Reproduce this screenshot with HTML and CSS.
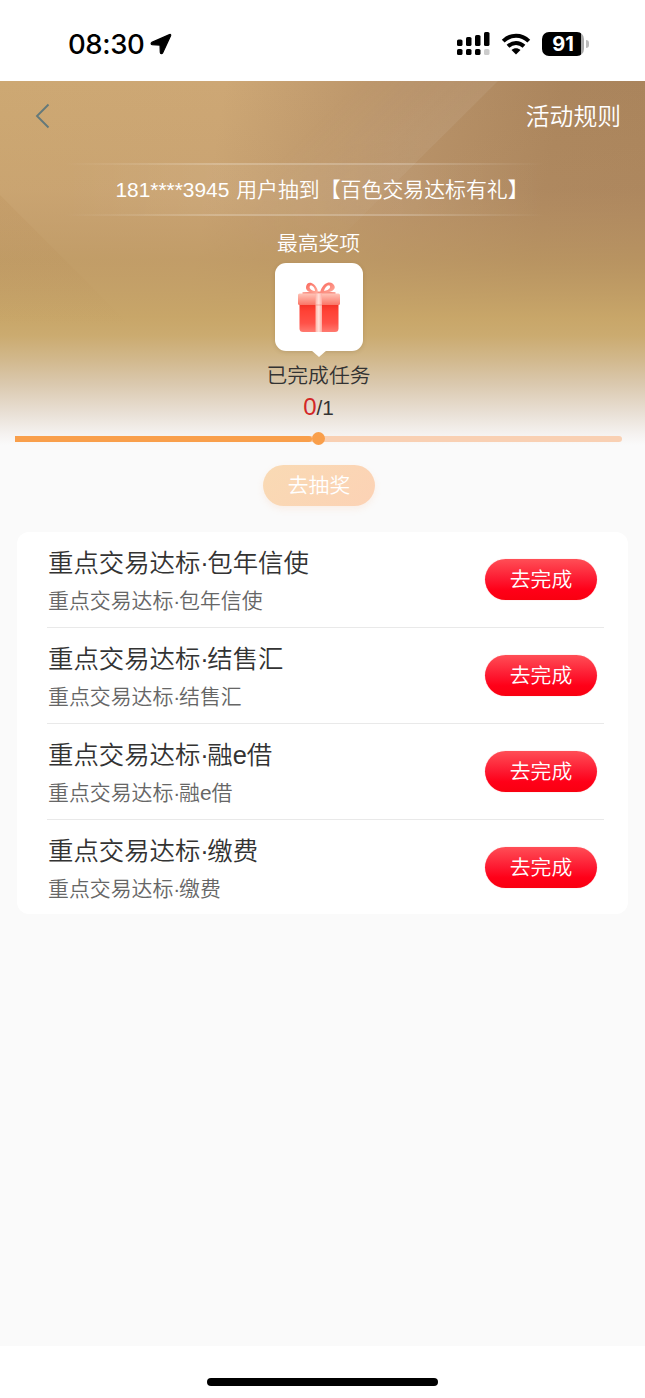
FILE: index.html
```html
<!DOCTYPE html>
<html lang="zh-CN">
<head>
<meta charset="utf-8">
<title>活动</title>
<link rel="stylesheet" href="styles.css">
</head>
<body>
<div class="screen">
  <header class="status">
    <div class="status-left">
      <span class="clock">08:30</span>
      <svg class="location" width="22" height="22" viewBox="0 0 22 22"><path stroke="#000" stroke-width="1.200" stroke-linejoin="round" d="M19.500 1.600 1.800 9.400C.8 10 .9 11.500 2.100 11.700L10 12.100 10.300 19.500C10.500 21 12 21 12.600 19.900L20.600 2.700C21 1.600 20.500 1.200 19.500 1.600Z"/></svg>
    </div>
    <div class="status-right">
      <svg width="33" height="24" viewBox="0 0 33 24"><rect x="0" y="7.500" width="5.500" height="6.500" rx="1.600"/><rect x="9" y="5" width="5.500" height="9" rx="1.600"/><rect x="18" y="3" width="5.500" height="11" rx="1.600"/><rect x="27" y="0" width="5.500" height="14" rx="1.600"/><rect x="0" y="17" width="5.500" height="6" rx="1.600"/><rect x="9" y="17" width="5.500" height="6" rx="1.600"/><rect x="18" y="17" width="5.500" height="6" rx="1.600"/><rect x="27" y="17" width="5.500" height="6" rx="1.600" fill="#ccc"/></svg>
      <svg class="wifi" width="30" height="22" viewBox="0 0 30 22" fill="none" stroke="#000" stroke-width="4"><path d="M2.200 8.100C9.600.900 20.400.900 27.800 8.100"/><path d="M7 13.300C11.700 8.900 18.300 8.900 23 13.300"/><path d="M15 21.500 10.500 17C13.200 14.500 16.800 14.500 19.500 17Z" fill="#000" stroke="none"/></svg>
      <div class="battery"><span class="battery-level">91</span><i class="battery-tip"></i></div>
    </div>
  </header>

  <main class="page">
    <section class="hero">
      <svg class="hero-art" width="645" height="364" viewBox="0 0 645 364">
        <defs>
          <linearGradient id="base" x1="0" y1="0" x2="645" y2="110" gradientUnits="userSpaceOnUse"><stop offset="0" stop-color="#cda873"/><stop offset=".34" stop-color="#cda775"/><stop offset=".62" stop-color="#b89269"/><stop offset=".85" stop-color="#ab855d"/><stop offset="1" stop-color="#aa845c"/></linearGradient>
          <linearGradient id="gold" x1="0" y1="0" x2="0" y2="1"><stop offset="0" stop-color="#bd9862" stop-opacity="0"/><stop offset=".3" stop-color="#bc9568" stop-opacity=".2"/><stop offset=".49" stop-color="#bd9963" stop-opacity=".72"/><stop offset=".65" stop-color="#c8a669"/><stop offset=".7" stop-color="#cbab70"/><stop offset=".76" stop-color="#d1b78a"/><stop offset=".83" stop-color="#dac8ad"/><stop offset=".91" stop-color="#e8dfd4"/><stop offset=".97" stop-color="#f5f2f0"/><stop offset="1" stop-color="#fafafa"/></linearGradient>
          <linearGradient id="ray" x1="405" y1="92.500" x2="335" y2="22" gradientUnits="userSpaceOnUse"><stop offset="0" stop-color="#fff" stop-opacity=".07"/><stop offset="1" stop-color="#fff" stop-opacity="0"/></linearGradient>
          <linearGradient id="raymask" x1="0" y1="0" x2="0" y2="1"><stop offset=".3" stop-color="#fff"/><stop offset="1" stop-color="#000"/></linearGradient>
          <mask id="fade"><rect width="645" height="185" fill="url(#raymask)"/></mask>
          <linearGradient id="shade" x1="0" y1="110" x2="0" y2="245" gradientUnits="userSpaceOnUse"><stop offset="0" stop-color="#a9793f" stop-opacity=".12"/><stop offset="1" stop-color="#a9793f" stop-opacity="0"/></linearGradient>
        </defs>
        <rect width="645" height="364" fill="url(#base)"/>
        <rect width="645" height="364" fill="url(#gold)"/>
        <path d="M498 0 312 185H100L200 0Z" fill="url(#ray)" mask="url(#fade)"/>
        <path d="M0 114 131 245H0Z" fill="url(#shade)"/>
      </svg>
      <nav class="nav">
        <svg width="15" height="26" viewBox="0 0 15 26" fill="none" stroke="#64797a" stroke-width="1.900"><path d="M13.500 1.500 2 13 13.500 24.500"/></svg>
        <span class="rules">活动规则</span>
      </nav>
      <div class="winner">181****3945 用户抽到【百色交易达标有礼】</div>
      <div class="prize">
        <div class="prize-label">最高奖项</div>
        <div class="gift">
          <svg width="44" height="52" viewBox="0 0 44 52">
            <defs>
              <linearGradient id="box" x1="0" y1="0" x2="0" y2="1"><stop stop-color="#ef2c20"/><stop offset=".3" stop-color="#ff4135"/><stop offset=".7" stop-color="#ff5148"/><stop offset="1" stop-color="#ff7a70"/></linearGradient>
              <linearGradient id="lid" x1="0" y1="0" x2="0" y2="1"><stop stop-color="#ffc4b7"/><stop offset="1" stop-color="#fa7566"/></linearGradient>
              <linearGradient id="ribbon" x1="0" y1="0" x2="1" y2="0"><stop stop-color="#ffb5a9"/><stop offset=".5" stop-color="#ffe1da"/><stop offset="1" stop-color="#ffaaa0"/></linearGradient>
              <linearGradient id="bow" x1="0" y1="0" x2="1" y2="1"><stop stop-color="#fa655a"/><stop offset="1" stop-color="#ffaf9f"/></linearGradient>
            </defs>
            <path d="M2.500 21H41.500V47.500Q41.500 51 38 51H6Q2.500 51 2.500 47.500Z" fill="url(#box)"/>
            <path d="M5.500 11.200 20 10.500H25L38.500 11.200V13H5.500Z" fill="#f98f83"/>
            <rect x="1" y="12.500" width="42" height="11.500" rx="1.500" fill="url(#lid)"/>
            <path d="M18.500 12.500H25V51H18.500Z" fill="url(#ribbon)"/>
            <path d="M18.500 24H25" stroke="#ee786a" opacity=".5"/>
            <g fill="url(#bow)" fill-rule="evenodd"><path d="M20.500 12C14 12 8.500 10.500 9 6 9.500 1.500 13.500.500 17 3.500 20 6.300 21.500 10 20.500 12ZM18 10C18 7.300 16 4.800 14 4.200 11.300 5.300 12.500 9.300 18 10Z"/><path d="M23.500 12C30 12 38 10.500 37.800 6 37.200 1.300 31.500 0 28 3 25 5.800 22.800 10 23.500 12ZM27 10C27.500 7 29.500 4.500 32 4.200 34.500 5.300 33 9 27 10Z"/></g>
          </svg>
        </div>
        <div class="done-label">已完成任务</div>
        <div class="count"><span class="count-now">0</span>/1</div>
      </div>
      <div class="progress"><div class="progress-fill"></div><div class="progress-dot"></div></div>
    </section>
    <button class="draw">去抽奖</button>
    <section class="tasks">
      <article class="task"><div class="task-text"><h2>重点交易达标<b class="dot">·</b>包年信使</h2><p>重点交易达标<b class="dot">·</b>包年信使</p></div><button class="go">去完成</button></article>
      <article class="task"><div class="task-text"><h2>重点交易达标<b class="dot">·</b>结售汇</h2><p>重点交易达标<b class="dot">·</b>结售汇</p></div><button class="go">去完成</button></article>
      <article class="task"><div class="task-text"><h2>重点交易达标<b class="dot">·</b>融e借</h2><p>重点交易达标<b class="dot">·</b>融e借</p></div><button class="go">去完成</button></article>
      <article class="task"><div class="task-text"><h2>重点交易达标<b class="dot">·</b>缴费</h2><p>重点交易达标<b class="dot">·</b>缴费</p></div><button class="go">去完成</button></article>
    </section>
  </main>
  <footer class="home"><div class="home-bar"></div></footer>
</div>
</body>
</html>
```
FILE: styles.css
```css
* { box-sizing: border-box; }
body {
  margin: 0;
  background: #fff;
  color: #333;
  font-family: "Liberation Sans", "Noto Sans CJK SC", sans-serif;
  font-weight: 350;
}
svg { display: block; flex: none; }
button {
  border: 0;
  padding: 0;
  font: inherit;
  color: #fff;
}
.screen {
  width: 645px;
  height: 1398px;
  display: flex;
  flex-direction: column;
  overflow: hidden;
}

/* Status bar */
.status {
  flex: none;
  height: 81px;
  padding: 3px 56px 0 68px;
  display: flex;
  justify-content: space-between;
  align-items: flex-start;
}
.status-left, .status-right { display: flex; align-items: center; }
.status-left { height: 82px; gap: 4px; }
.status-right { padding-top: 29px; }
.clock {
  font: 500 27.5px/34px Inter, sans-serif;
  letter-spacing: -.4px;
  color: #000;
  width: 78px;
  white-space: nowrap;
}
.wifi { margin-left: 11px; }
.battery { display: flex; align-items: center; gap: 2px; margin-left: 11px; }
.battery-level {
  width: 42px;
  height: 24px;
  border-radius: 7px;
  background: linear-gradient(90deg, #000 39px, #aaa 39px);
  color: #fff;
  font: 700 20px/24px Inter, sans-serif;
  text-align: center;
}
.battery-tip { width: 3px; height: 8px; border-radius: 0 3px 3px 0; background: #bbb; }

/* Hero */
.page { flex: 1; background: #fafafa; }
.hero { position: relative; height: 364px; }
.hero-art { position: absolute; left: 0; top: 0; }
.hero > :not(.hero-art) { position: relative; }
.nav {
  height: 82px;
  padding: 0 24px 12px 35px;
  display: flex;
  align-items: center;
  justify-content: space-between;
}
.rules { font-size: 23.8px; line-height: 34px; padding-top: 2px; color: #fff; }
.winner {
  height: 53px;
  margin: 0 63px;
  padding-left: 52.5px;
  font-size: 20.9px;
  line-height: 54px;
  word-spacing: 1px;
  white-space: nowrap;
  color: #fff;
  background:
    linear-gradient(90deg, transparent, rgba(255,255,255,.2) 30%, rgba(255,255,255,.2) 65%, transparent 93%) 0 0 / 100% 2px no-repeat,
    linear-gradient(90deg, transparent, rgba(255,255,255,.2) 30%, rgba(255,255,255,.2) 65%, transparent 93%) 0 100% / 100% 2px no-repeat,
    linear-gradient(90deg, transparent, rgba(255,255,255,.05) 30%, rgba(255,255,255,.05) 65%, transparent 93%);
}
.prize {
  width: 637px;
  display: flex;
  flex-direction: column;
  align-items: center;
  font-size: 20.8px;
}
.prize-label { height: 46px; line-height: 56px; color: #fff; }
.gift {
  position: relative;
  width: 88px;
  height: 88px;
  margin: 1px 0 0 1px;
  padding: 18px 22px;
  border-radius: 11px;
  background: #fff;
  box-shadow: 0 1px 4px rgba(90,60,20,.18);
}
.gift::after {
  content: "";
  position: absolute;
  left: 36px;
  top: 87px;
  border: 8px solid transparent;
  border-top: 7px solid #fff;
  border-bottom: 0;
}
.done-label { height: 41px; line-height: 50px; }
.count { height: 30px; line-height: 30px; font-size: 20.8px; }
.count-now { font-size: 24px; color: #d32727; }
.progress {
  width: 607px;
  height: 6px;
  margin: 13.5px 0 0 15px;
  display: flex;
  align-items: center;
  border-radius: 0 3px 3px 0;
  background: #f9d0b3;
}
.progress-fill { width: 297px; height: 6px; border-radius: 0 3px 3px 0; background: #f99f4b; }
.progress-dot { width: 13px; height: 13px; border-radius: 50%; background: #f99f4b; }
.draw {
  display: block;
  width: 112px;
  height: 41px;
  margin: 20px 0 0 263px;
  border-radius: 21px;
  background: linear-gradient(135deg, #f9dab4, #fcd2b5);
  box-shadow: 0 3px 7px rgba(250,170,120,.14);
  font-size: 20.8px;
  line-height: 41px;
}

/* Task list */
.tasks {
  width: 611px;
  height: 382px;
  margin: 26px 0 0 17px;
  padding: 0 24px 0 30px;
  border-radius: 12px;
  background: #fff;
}
.task {
  height: 96px;
  padding: 0 7px 0 1px;
  display: flex;
  align-items: center;
  justify-content: space-between;
  border-bottom: 1px solid #e9e9e9;
}
.task:last-child { border-color: transparent; }
.task-text { padding-top: 4px; }
.task h2, .task p { margin: 0; font-weight: 350; white-space: nowrap; }
.task h2 { font-size: 25.4px; line-height: 38px; }
.task p { font-size: 20.9px; line-height: 37px; color: #666; }
.dot { font-weight: 350; letter-spacing: -.06em; }
.go {
  width: 112px;
  height: 41px;
  margin-bottom: 1px;
  border-radius: 21px;
  background: linear-gradient(#ff4e56, #fd1930 50%, #ff0018 75%, #f90010);
  box-shadow: 0 0 1px rgba(255,0,20,.4);
  font-size: 20.8px;
  line-height: 41px;
}

/* Home indicator */
.home { flex: none; height: 52px; padding: 32px 0 0 207px; }
.home-bar { width: 231px; height: 8px; border-radius: 4px; background: #000; }
```
